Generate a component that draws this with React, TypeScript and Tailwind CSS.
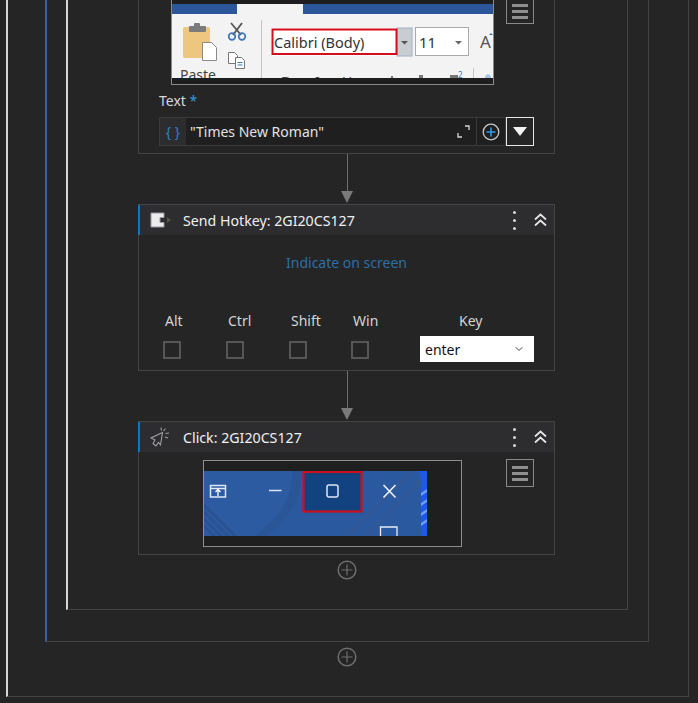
import { ChevronDown } from 'lucide-react'

const uiFont = "font-['Noto_Sans','Open_Sans',sans-serif]"

function Hamburger({ cut }: { cut?: boolean }) {
  return (
    <div
      className={`w-[28px] border border-[#8a8a8a] flex flex-col items-center gap-[3px] ${
        cut ? 'h-[24px] border-t-0 pt-[4px]' : 'h-[28px] pt-[6px]'
      }`}
    >
      <div className="w-[16px] h-[3px] bg-[#8f8f8f]" />
      <div className="w-[16px] h-[3px] bg-[#8f8f8f]" />
      <div className="w-[16px] h-[3px] bg-[#8f8f8f]" />
    </div>
  )
}

function PlusCircle() {
  return (
    <svg width="20" height="20" viewBox="0 0 20 20" fill="none" stroke="#6e6e6e">
      <circle cx="10" cy="10" r="8.8" strokeWidth="1.5" />
      <path d="M10 4.500v11M4.500 10h11" strokeWidth="1.2" />
    </svg>
  )
}

function Connector() {
  return (
    <div className="flex flex-col items-center w-[14px] -ml-px">
      <div className="w-[1px] h-[37px] bg-[#6e6e6e]" />
      <svg width="14" height="13" viewBox="0 0 14 13">
        <path d="M1 0h12L7 12z" fill="#7a7a7a" />
      </svg>
    </div>
  )
}

function HeaderActions() {
  return (
    <div className="flex items-center">
      <div className="flex flex-col gap-[5px] mr-[18px]">
        <div className="w-[3px] h-[3px] rounded-full bg-[#d8d8d8]" />
        <div className="w-[3px] h-[3px] rounded-full bg-[#d8d8d8]" />
        <div className="w-[3px] h-[3px] rounded-full bg-[#d8d8d8]" />
      </div>
      <svg width="13" height="14" viewBox="0 0 13 14" fill="none" stroke="#e6e6e6" strokeWidth="1.7" className="mr-[7px]">
        <path d="M1 6.500 6.500 1.500 12 6.500M1 12.500 6.500 7.500 12 12.500" />
      </svg>
    </div>
  )
}

function CardHeader({ icon, title }: { icon: React.ReactNode; title: string }) {
  return (
    <div className="h-[30px] bg-[#2d2d30] border-l-2 border-[#007acc] flex items-center justify-between -ml-px">
      <div className="flex items-center">
        <div className="w-[43px] pl-[10px] flex items-center">{icon}</div>
        <span className="mt-[2px] text-[14.2px] text-[#f0f0f0]">{title}</span>
      </div>
      <HeaderActions />
    </div>
  )
}

function WordRibbon() {
  return (
    <svg width="323" height="85" viewBox="0 0 323 85" className="shrink-0">
      <rect width="323" height="85" fill="#1e1e1e" />
      <rect x="1" y="4" width="321" height="74" fill="#f3f3f3" />
      <rect x="1" y="4" width="65" height="10" fill="#2b579a" />
      <rect x="132" y="4" width="190" height="10" fill="#2b579a" />
      {/* clipboard */}
      <rect x="12" y="27" width="27" height="31" rx="2" fill="#edc77f" />
      <rect x="18" y="26" width="17" height="6" rx="1" fill="#7b7b7b" />
      <rect x="23" y="23" width="6" height="4" rx="1" fill="#7b7b7b" />
      <path d="M31.500 42.500h9l5 5v13h-14z" fill="#fff" stroke="#8a8a8a" />
      <text x="9" y="80" fontSize="14" fill="#444" fontFamily="'Noto Sans',sans-serif">Paste</text>
      {/* scissors */}
      <path d="M60 23l10 12M71 23l-9 12" stroke="#555" strokeWidth="1.800" fill="none" />
      <circle cx="61" cy="36.500" r="3.300" fill="none" stroke="#3f77b5" strokeWidth="1.700" />
      <circle cx="71" cy="36.500" r="3.300" fill="none" stroke="#3f77b5" strokeWidth="1.700" />
      {/* copy */}
      <path d="M57.500 52.500h6l3 3v8h-9z" fill="#fff" stroke="#777" />
      <path d="M64.500 57.500h6l3 3v8h-9z" fill="#fff" stroke="#777" />
      <path d="M66.500 62.500h5M66.500 65h5" stroke="#3f77b5" />
      <rect x="90" y="20" width="1" height="58" fill="#c6c6c6" />
      {/* font box */}
      <rect x="100" y="28" width="141" height="28" fill="#fff" />
      <rect x="226" y="28" width="15" height="28" fill="#c9ccd1" stroke="#9fb0c6" />
      <rect x="101.500" y="29.500" width="124" height="24.500" fill="#fff" stroke="#d40d1c" strokeWidth="2" />
      <text x="103" y="47.500" fontSize="14.500" fill="#333" fontFamily="'Noto Sans',sans-serif">Calibri (Body)</text>
      <path d="M230 41h7l-3.500 3.500z" fill="#555" />
      <rect x="244.500" y="27.500" width="53" height="28" fill="#fff" stroke="#aaa" />
      <text x="248" y="47.500" fontSize="15" fill="#333" fontFamily="'Noto Sans',sans-serif">11</text>
      <path d="M284 41h7l-3.500 3.500z" fill="#666" />
      <text x="309" y="48" fontSize="17" fill="#555" fontFamily="'Noto Sans',sans-serif">A</text>
      <path d="M318 35l2-2 2 2z" fill="#3f77b5" />
      {/* second ribbon row, cut off by the strip below */}
      <text x="110" y="87" fontSize="14" fontWeight="700" fill="#444" fontFamily="'Noto Sans',sans-serif">B</text>
      <text x="144" y="87" fontSize="14" fill="#444" fontFamily="'Noto Sans',sans-serif">I</text>
      <text x="171" y="87" fontSize="14" fill="#444" fontFamily="'Noto Sans',sans-serif">U</text>
      <rect x="220" y="76" width="2" height="2" fill="#777" />
      <rect x="248" y="75" width="4" height="3" fill="#777" />
      <rect x="279" y="75" width="8" height="3" fill="#777" />
      <text x="287" y="78" fontSize="8" fill="#3f77b5" fontFamily="'Noto Sans',sans-serif">2</text>
      <rect x="302" y="68" width="1" height="10" fill="#c6c6c6" />
      <path d="M314 78c0-5 6-5 6 0z" fill="#a9c4e2" />
      <rect x="1" y="78" width="321" height="6" fill="#1e1e1e" />
      <rect x="0" y="84" width="323" height="1" fill="#8a8a8a" />
      <rect x="0" y="0" width="1" height="85" fill="#8a8a8a" />
      <rect x="322" y="0" width="1" height="85" fill="#8a8a8a" />
    </svg>
  )
}

function WindowShot() {
  return (
    <svg width="223" height="65" viewBox="0 0 223 65" className="block">
      <rect width="223" height="65" fill="#2b599f" />
      <path d="M0 0h88c1 24-12 48-38 65H0z" fill="#2c5ba2" />
      <path d="M88 0c2 26-12 48-38 65h12C86 48 99 26 97 0z" fill="#2a5597" />
      <path d="M0 36l29 29h4L0 32zM0 43l22 22h4L0 39zM0 50l15 15h4L0 46zM0 57l8 8h4L0 53z" fill="#2a5394" />
      <path d="M140 65l65-65h6l-65 65zM158 65l59-59v6l-53 53z" fill="#31599a" />
      <path d="M214 0h9v65h-6V10c0-5-1-8-3-10z" fill="#1d59e6" />
      <path d="M217 22l6-4v3l-6 4zM217 32l6-4v3l-6 4zM217 42l6-4v3l-6 4zM217 52l6-4v3l-6 4z" fill="#6f9cec" />
      <rect x="99.500" y="1" width="58" height="39.500" fill="#12427f" stroke="#c9101e" strokeWidth="2.200" />
      <rect x="6.500" y="14.500" width="15" height="11.500" fill="none" stroke="#dfe7f5" strokeWidth="1.500" />
      <path d="M7 17.500h14" stroke="#dfe7f5" strokeWidth="1.500" />
      <path d="M14 25v-6M11.500 21l2.500-2.500 2.500 2.500" stroke="#fff" fill="none" strokeWidth="1.300" />
      <path d="M65 19.500h12.500" stroke="#dde5f4" strokeWidth="1.500" />
      <rect x="123" y="14" width="11" height="12" rx="2" fill="none" stroke="#dde5f4" strokeWidth="1.500" />
      <path d="M179.500 14l12 12.500M191.500 14l-12 12.500" stroke="#eef2fa" strokeWidth="1.600" />
      <path d="M176.500 65V56h16.500v9" fill="none" stroke="#e6ecf7" strokeWidth="1.300" />
    </svg>
  )
}

function HotkeyField({ label, w }: { label: string; w: string }) {
  return (
    <div className={`flex flex-col items-start ${w}`}>
      <span className="ml-[2px] text-[14px] leading-[20px] text-[#d4d4d4]">{label}</span>
      <div className="w-[18px] h-[18px] border-2 border-[#565656] mt-[10px]" />
    </div>
  )
}

export default function App() {
  return (
    <div className={`w-[698px] h-[703px] overflow-hidden bg-[#252526] pl-[6px] ${uiFont}`}>
      <div className="w-[683px] h-[697px] border-l-2 border-r border-b border-l-[#d6d6d6] border-[#444446] pl-[37px] flex flex-col">
        <div className="w-[604px] h-[642px] border-l-2 border-r border-b border-l-[#3f5f9f] border-[#444446] pl-[19px]">
          <div className="w-[562px] h-[610px] border-l-2 border-r border-b border-l-[#d6d6d6] border-[#444446] flex flex-col items-center">
            <div className="w-[417px] h-[154px] border-x border-b border-[#444446] pl-[20px] pr-[20px] -ml-[2px]">
              <div className="flex">
                <div className="ml-[12px]">
                  <WordRibbon />
                </div>
                <div className="ml-[12px]">
                  <Hamburger cut />
                </div>
              </div>
              <div className="mt-[6px] text-[14px] leading-[20px] text-[#d8d8d8]">
                Text <span className="text-[#3794d8]">*</span>
              </div>
              <div className="mt-[6px] flex h-[29px] w-[375px]">
                <div className="flex-1 flex items-center border border-[#3b3b3d] bg-[#1f1f20]">
                  <div className="w-[26px] h-full bg-[#2d2d30] flex items-center justify-center text-[#2f7fc1] text-[14px]">
                    {'{ }'}
                  </div>
                  <span className="ml-[4px] flex-1 text-[14px] text-[#e2e2e2]">"Times New Roman"</span>
                  <svg width="13" height="13" viewBox="0 0 13 13" fill="none" stroke="#d8d8d8" strokeWidth="1.300" className="mr-[6px]">
                    <path d="M8 1h4v4M1 8v4h4" />
                  </svg>
                  <div className="w-px h-full bg-[#3b3b3d]" />
                  <svg width="28" height="18" viewBox="0 0 28 18" fill="none" className="shrink-0">
                    <circle cx="14" cy="9" r="7.800" stroke="#c8c8c8" strokeWidth="1.300" />
                    <path d="M14 4.500v9M9.500 9h9" stroke="#2f9ae8" strokeWidth="1.600" />
                  </svg>
                </div>
                <div className="w-[28px] border border-[#e6e6e6] flex items-center justify-center">
                  <svg width="14" height="9" viewBox="0 0 14 9">
                    <path d="M0 0h14L7 9z" fill="#f2f2f2" />
                  </svg>
                </div>
              </div>
            </div>

            <Connector />

            <div className="w-[417px] h-[167px] border border-[#444446] -ml-[2px]">
              <CardHeader
                title="Send Hotkey: 2GI20CS127"
                icon={
                  <svg width="21" height="16" viewBox="0 0 21 16">
                    <path d="M15 8h2V5l4 3-4 3V8z" fill="#55554a" />
                    <path d="M1 1h13v4.500h-4v5h4V15H1z" fill="#ececec" stroke="#9a9a9a" />
                  </svg>
                }
              />
              <div className="mt-[18px] text-center text-[14px] leading-[20px] text-[#2f6ea5]">Indicate on screen</div>
              <div className="mt-[38px] flex">
                <div className="ml-[24px] flex">
                  <HotkeyField label="Alt" w="w-[63px]" />
                  <HotkeyField label="Ctrl" w="w-[63px]" />
                  <HotkeyField label="Shift" w="w-[62px]" />
                  <HotkeyField label="Win" w="w-[69px]" />
                </div>
                <div className="w-[114px] flex flex-col items-start">
                  <span className="ml-[39px] text-[14px] leading-[20px] text-[#d4d4d4]">Key</span>
                  <div className="mt-[5px] w-[114px] h-[26px] bg-white flex items-center justify-between pl-[5px] pr-[9px] text-[14px] text-[#111]">
                    enter
                    <ChevronDown size={12} strokeWidth={2} color="#444" />
                  </div>
                </div>
              </div>
            </div>

            <Connector />

            <div className="w-[417px] h-[134px] border border-[#444446] -ml-[2px]">
              <CardHeader
                title="Click: 2GI20CS127"
                icon={
                  <svg width="20" height="20" viewBox="0 0 20 20" fill="none" stroke="#a0a0a0" strokeWidth="1.100">
                    <path d="M12.500 5.500 1 11l4 2-2 3.500L6 19l2.500-3.500 2 2.500z" />
                    <path d="M11 .5l.5 3M15.500 1.500l-2 2.500M19 6l-3.500.5M18 11l-3-1" />
                  </svg>
                }
              />
              <div className="flex mt-[8px] pl-[64px]">
                <div className="w-[259px] h-[87px] border border-[#8f8f8f] bg-[#1f1f20] pt-[10px]">
                  <WindowShot />
                </div>
                <div className="ml-[44px] -mt-px">
                  <Hamburger />
                </div>
              </div>
            </div>

            <div className="mt-[5px] -ml-[2px]">
              <PlusCircle />
            </div>
          </div>
        </div>
        <div className="mt-[5px] w-[604px] flex justify-center">
          <PlusCircle />
        </div>
      </div>
    </div>
  )
}
